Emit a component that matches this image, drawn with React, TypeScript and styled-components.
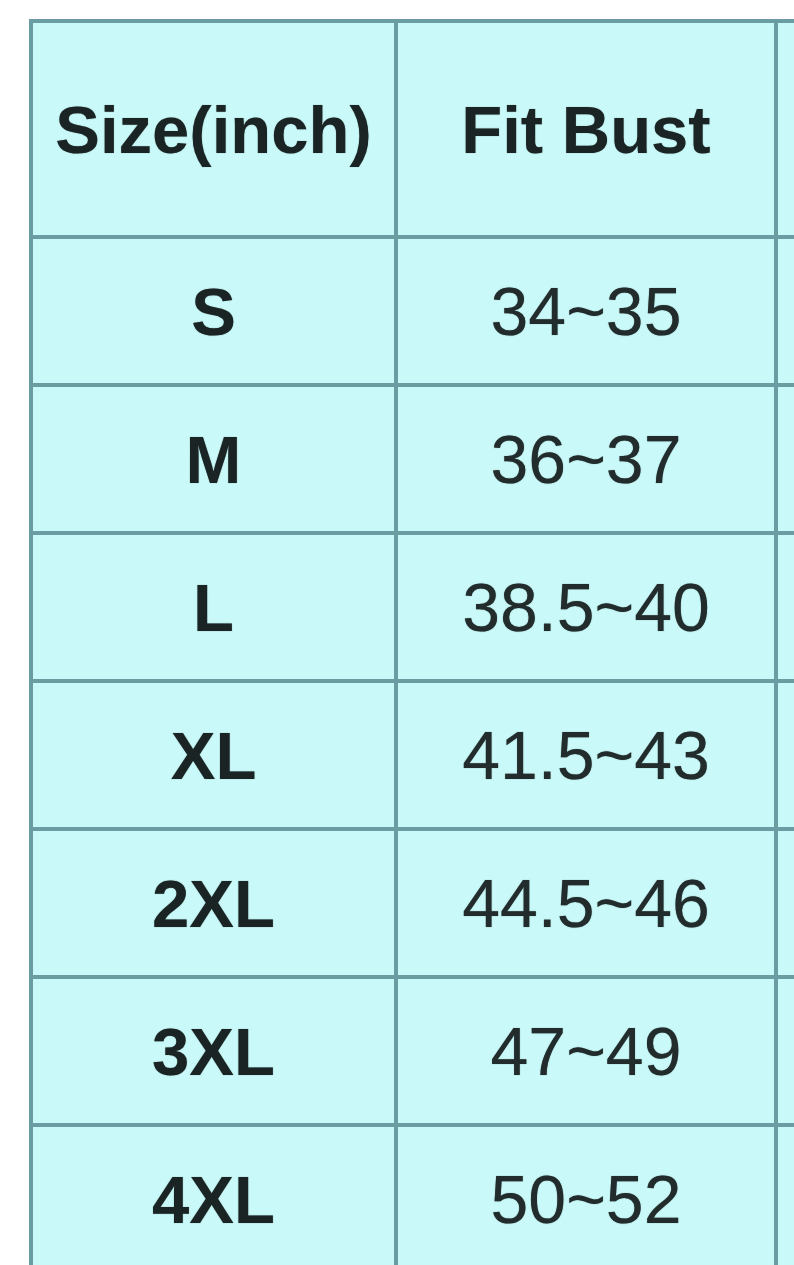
import React from "react";
import styled, { createGlobalStyle } from "styled-components";

const GlobalStyle = createGlobalStyle`
  html, body {
    margin: 0;
    padding: 0;
    background: #ffffff;
  }
  body {
    font-family: "Liberation Sans", Arial, sans-serif;
  }
`;

const Page = styled.div`
  width: 794px;
  height: 1265px;
  overflow: hidden;
  background: #ffffff;
  padding: 19px 0 0 29px;
  box-sizing: border-box;
`;

const Chart = styled.div`
  display: grid;
  grid-template-columns: 361px 376px 300px;
  grid-template-rows: 212px repeat(7, 144px);
  gap: 4px;
  padding: 4px 0 0 4px;
  width: max-content;
  background: #6a9da1;
`;

const HeadCell = styled.div`
  background: #c9f9f8;
  display: flex;
  align-items: center;
  justify-content: center;
  font-size: 67px;
  font-weight: 700;
  color: #1a2424;
  line-height: 1;
  white-space: nowrap;
  text-shadow: 0 0 1px rgba(20, 35, 35, 0.5);
`;

const Cell = styled.div<{ $bold?: boolean }>`
  background: #c9f9f8;
  display: flex;
  align-items: center;
  justify-content: center;
  font-size: ${(p) => (p.$bold ? "67px" : "68px")};
  font-weight: ${(p) => (p.$bold ? 700 : 400)};
  color: ${(p) => (p.$bold ? "#1a2424" : "#222c2c")};
  line-height: 1;
  white-space: nowrap;
  text-shadow: 0 0 1px rgba(20, 35, 35, 0.6);
`;

const rows: [string, string][] = [
  ["S", "34~35"],
  ["M", "36~37"],
  ["L", "38.5~40"],
  ["XL", "41.5~43"],
  ["2XL", "44.5~46"],
  ["3XL", "47~49"],
  ["4XL", "50~52"],
];

export default function App() {
  return (
    <>
      <GlobalStyle />
      <Page>
        <Chart>
          <HeadCell>Size(inch)</HeadCell>
          <HeadCell>Fit Bust</HeadCell>
          <HeadCell />
          {rows.map(([size, bust]) => (
            <React.Fragment key={size}>
              <Cell $bold>{size}</Cell>
              <Cell>{bust}</Cell>
              <Cell />
            </React.Fragment>
          ))}
        </Chart>
      </Page>
    </>
  );
}
